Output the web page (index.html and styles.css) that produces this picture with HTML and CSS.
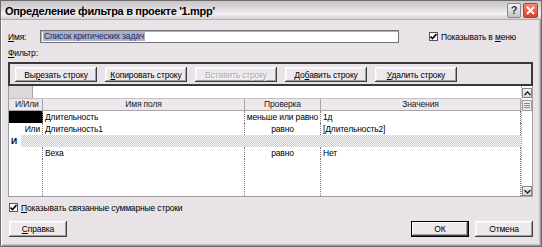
FILE: index.html
```html
<!DOCTYPE html>
<html lang="ru">
<head>
<meta charset="utf-8">
<title>Определение фильтра</title>
<link rel="stylesheet" href="styles.css">
</head>
<body>
<div class="window">
  <div class="titlebar">
    <span class="title">Определение фильтра в проекте '1.mpp'</span>
    <span class="tb-btn help">?</span>
    <span class="tb-btn close"><svg width="9" height="9" viewBox="0 0 9 9"><path d="M1 1L8 8M8 1L1 8" stroke="#fff" stroke-width="2"/></svg></span>
  </div>
  <div class="content">
    <div class="name-row">
      <span class="label"><u>И</u>мя:</span>
      <div class="input"><span class="sel">Список критических задач</span></div>
      <label class="check menu-check"><span class="box"><svg width="7" height="7" viewBox="0 0 7 7"><path d="M0.5 3.5L2.5 5.5L6.5 1" fill="none" stroke="#000" stroke-width="1.6"/></svg></span><span>Показывать в <u>м</u>еню</span></label>
    </div>
    <div class="filter-label"><u>Ф</u>ильтр:</div>
    <div class="toolbar">
      <button class="btn">Вы<u>р</u>езать строку</button>
      <button class="btn"><u>К</u>опировать строку</button>
      <button class="btn disabled">Вставить строку</button>
      <button class="btn">До<u>б</u>авить строку</button>
      <button class="btn"><u>У</u>далить строку</button>
    </div>
    <div class="grid">
      <div class="table">
        <div class="edit-row"><span class="edit-sel"></span></div>
        <div class="cols head">
          <span class="c1">И/Или</span><span>Имя поля</span><span>Проверка</span><span>Значения</span>
        </div>
        <div class="cols">
          <span class="selcell"></span><span>Длительность</span><span class="center">меньше или равно</span><span>1д</span>
        </div>
        <div class="cols">
          <span class="right">Или</span><span>Длительность1</span><span class="center">равно</span><span>[Длительность2]</span>
        </div>
        <div class="group"><span class="group-op">И</span></div>
        <div class="cols">
          <span></span><span>Веха</span><span class="center">равно</span><span>Нет</span>
        </div>
        <div class="cols filler">
          <span></span><span></span><span></span><span></span>
        </div>
      </div>
      <div class="scrollbar">
        <span class="sb-btn"><svg width="7" height="5" viewBox="0 0 7 5"><path d="M0.5 4L3.5 1L6.5 4" fill="none" stroke="#222" stroke-width="1.4"/></svg></span>
        <span class="sb-thumb"><i></i><i></i><i></i></span>
        <span class="sb-track"></span>
        <span class="sb-btn"><svg width="7" height="5" viewBox="0 0 7 5"><path d="M0.5 1L3.5 4L6.5 1" fill="none" stroke="#222" stroke-width="1.4"/></svg></span>
      </div>
    </div>
    <label class="check summary-check"><span class="box"><svg width="7" height="7" viewBox="0 0 7 7"><path d="M0.5 3.5L2.5 5.5L6.5 1" fill="none" stroke="#000" stroke-width="1.6"/></svg></span><span><u>П</u>оказывать связанные суммарные строки</span></label>
    <div class="footer">
      <button class="btn fbtn"><u>С</u>правка</button>
      <span class="spacer"></span>
      <button class="btn fbtn default">ОК</button>
      <button class="btn fbtn">Отмена</button>
    </div>
  </div>
</div>
</body>
</html>
```

FILE: styles.css
```css
html, body {
  margin: 0;
  padding: 0;
}
body {
  font-family: "Liberation Sans", Arial, sans-serif;
  font-size: 8.5px;
  letter-spacing: -0.15px;
  color: #000;
  background: #e7e3e7;
}
u {
  text-decoration: underline;
  text-underline-offset: 1px;
}
.window {
  width: 542px;
  height: 247px;
  box-sizing: border-box;
  border: 1px solid #6c6c6c;
  background: #e7e3e7;
  display: flex;
  flex-direction: column;
  box-shadow: inset 1px 1px #ffffff, inset -1px -1px #9c989c, inset -2px -2px #c8c4c8;
}
.titlebar {
  height: 19px;
  box-sizing: border-box;
  display: flex;
  align-items: center;
  padding: 0 3px 0 4px;
  background: linear-gradient(#c9c5c9, #dad6da 35%, #f3f1f3 72%, #d3cfd3);
  border-bottom: 1px solid #b0acb0;
}
.title {
  flex: 1;
  font-weight: bold;
  font-size: 11px;
  letter-spacing: -0.3px;
  padding-top: 1px;
}
.tb-btn {
  height: 15px;
  box-sizing: border-box;
  border: 1px solid #8a868a;
  border-radius: 2px;
  display: flex;
  align-items: center;
  justify-content: center;
}
.help {
  width: 14px;
  margin-right: 2px;
  background: linear-gradient(#f4f4f4, #c4c4c4);
  font-weight: bold;
  font-size: 11px;
  color: #3a3a3a;
}
.close {
  width: 15px;
  background: linear-gradient(#f28a78, #d4402c);
  border-color: #9a4a40;
}
.content {
  flex: 1;
  display: flex;
  flex-direction: column;
  padding: 10px 8px 0 7px;
}
.name-row {
  display: flex;
  align-items: center;
  height: 13px;
}
.label {
  width: 32px;
}
.input {
  width: 359px;
  height: 13px;
  box-sizing: border-box;
  background: #fff;
  border: 1px solid #767276;
  box-shadow: inset 1px 1px #b4b0b4;
  padding-left: 2px;
  display: flex;
  align-items: center;
}
.sel {
  background: #a9b1cb;
  color: #1c2a5c;
  line-height: 9px;
  padding: 0 1px;
}
.check {
  display: flex;
  align-items: center;
  gap: 3px;
}
.box {
  width: 9px;
  height: 9px;
  box-sizing: border-box;
  border: 1px solid #555;
  background: #fff;
  display: flex;
  align-items: center;
  justify-content: center;
}
.menu-check {
  margin-left: 30px;
}
.filter-label {
  margin-top: 5px;
  height: 10px;
  line-height: 10px;
}
.toolbar {
  margin-top: 4px;
  height: 24px;
  box-sizing: border-box;
  border: 2px solid #3a383a;
  padding: 3px 0 0 5px;
  display: flex;
  gap: 8px;
}
.btn {
  font: inherit;
  letter-spacing: inherit;
  color: #000;
  margin: 0;
  padding: 0;
  border: none;
  background: #ece8ec;
  box-shadow: inset -1px -1px #404040, inset 1px 1px #ffffff, inset -2px -2px #a09ca0, inset 2px 2px #f6f4f6;
  white-space: nowrap;
}
.toolbar .btn {
  width: 82px;
  height: 15px;
}
.disabled {
  color: #aaa6aa;
  text-shadow: 1px 1px #fff;
}
.grid {
  height: 111px;
  box-sizing: border-box;
  display: flex;
  background: #fff;
  border-left: 1px solid #a09ca0;
  border-right: 1px solid #a09ca0;
  border-bottom: 1px solid #a09ca0;
}
.table {
  width: 512px;
  display: flex;
  flex-direction: column;
}
.edit-row {
  height: 13px;
  box-sizing: border-box;
  border-bottom: 1px solid #c4c0c4;
  display: flex;
}
.edit-sel {
  width: 23px;
  background: #dcd8dc;
  border-right: 1px solid #a8a4a8;
}
.cols {
  display: grid;
  grid-template-columns: 34px 202px 76px 200px;
  height: 12px;
}
.cols > span {
  box-sizing: border-box;
  border-right: 1px dotted #7c787c;
  line-height: 12px;
  white-space: nowrap;
  overflow: hidden;
  padding: 0 2px;
}
.head > span {
  background: #ece8ec;
  border-right: 1px solid #aaa6aa;
  border-bottom: 1px solid #aaa6aa;
  text-align: center;
  line-height: 11px;
  color: #222;
}
.head > .c1 {
  text-align: left;
  padding-left: 6px;
}
.cols > .selcell {
  background: #000;
}
.cols > .center {
  text-align: center;
  padding: 0;
}
.right {
  text-align: right;
}
.group {
  height: 12px;
  background: repeating-conic-gradient(#cacaca 0 25%, #f8f8f8 0 50%) 0 0 / 2px 2px;
  display: flex;
  align-items: center;
}
.group-op {
  background: #fff;
  font-weight: bold;
  line-height: 12px;
  padding: 0 4px 0 2px;
}
.cols.filler {
  flex: 1;
  height: auto;
}
.scrollbar {
  width: 11px;
  box-sizing: border-box;
  border-left: 1px dotted #a8a4a8;
  display: flex;
  flex-direction: column;
  align-items: center;
  padding-top: 2px;
}
.sb-btn {
  width: 10px;
  height: 10px;
  box-sizing: border-box;
  border: 1px solid #8c888c;
  background: linear-gradient(#f4f4f4, #d6d2d6);
  display: flex;
  align-items: center;
  justify-content: center;
}
.sb-thumb {
  margin-top: 2px;
  width: 10px;
  height: 11px;
  box-sizing: border-box;
  border: 1px solid #a09ca0;
  background: #ece8ec;
  display: flex;
  flex-direction: column;
  justify-content: center;
  align-items: center;
  gap: 1px;
}
.sb-thumb i {
  display: block;
  width: 6px;
  height: 1px;
  background: #8c888c;
}
.sb-track {
  flex: 1;
}
.summary-check {
  margin-top: 6px;
  padding-left: 1px;
  height: 9px;
}
.footer {
  margin-top: 9px;
  display: flex;
  gap: 6px;
  padding-left: 1px;
}
.spacer {
  flex: 1;
}
.fbtn {
  width: 58px;
  height: 16px;
}
.default {
  box-shadow: inset 0 0 0 1px #000, inset -2px -2px #404040, inset 2px 2px #ffffff, inset -3px -3px #a09ca0;
}
```
